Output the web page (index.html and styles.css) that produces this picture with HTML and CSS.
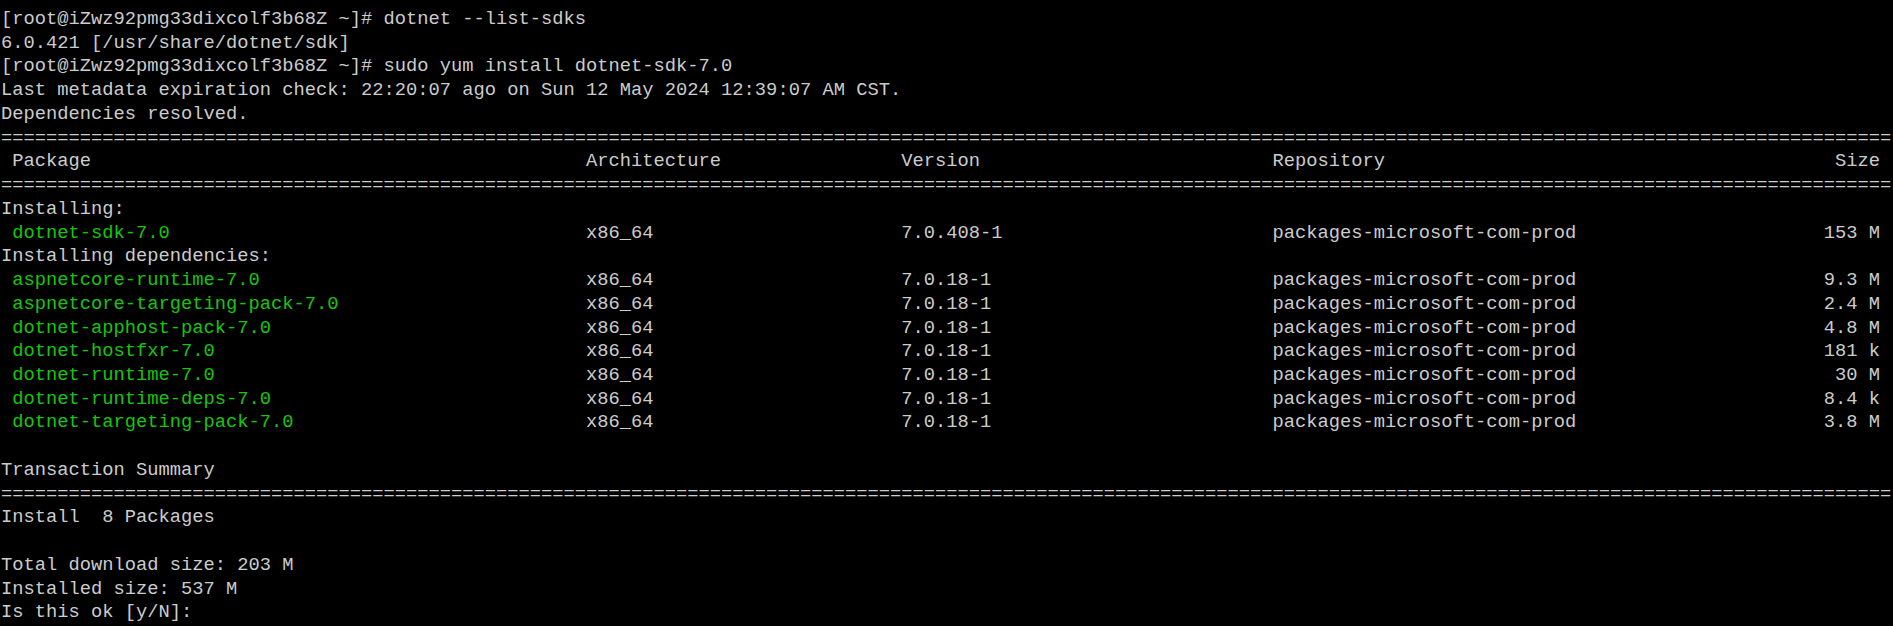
FILE: index.html
```html
<!DOCTYPE html>
<html lang="en">
<head>
<meta charset="utf-8">
<title>Terminal</title>
<link rel="stylesheet" href="styles.css">
</head>
<body>
<main class="term">
  <div class="line">[root@iZwz92pmg33dixcolf3b68Z ~]# dotnet --list-sdks</div>
  <div class="line">6.0.421 [/usr/share/dotnet/sdk]</div>
  <div class="line">[root@iZwz92pmg33dixcolf3b68Z ~]# sudo yum install dotnet-sdk-7.0</div>
  <div class="line">Last metadata expiration check: 22:20:07 ago on Sun 12 May 2024 12:39:07 AM CST.</div>
  <div class="line">Dependencies resolved.</div>
  <div class="line sep">========================================================================================================================================================================</div>
  <div class="row">
    <span class="c-pkg">Package</span><span>Architecture</span><span>Version</span><span>Repository</span><span class="c-size">Size</span>
  </div>
  <div class="line sep">========================================================================================================================================================================</div>
  <div class="line">Installing:</div>
  <div class="row">
    <span class="c-pkg green">dotnet-sdk-7.0</span><span>x86_64</span><span>7.0.408-1</span><span>packages-microsoft-com-prod</span><span class="c-size">153 M</span>
  </div>
  <div class="line">Installing dependencies:</div>
  <div class="row">
    <span class="c-pkg green">aspnetcore-runtime-7.0</span><span>x86_64</span><span>7.0.18-1</span><span>packages-microsoft-com-prod</span><span class="c-size">9.3 M</span>
  </div>
  <div class="row">
    <span class="c-pkg green">aspnetcore-targeting-pack-7.0</span><span>x86_64</span><span>7.0.18-1</span><span>packages-microsoft-com-prod</span><span class="c-size">2.4 M</span>
  </div>
  <div class="row">
    <span class="c-pkg green">dotnet-apphost-pack-7.0</span><span>x86_64</span><span>7.0.18-1</span><span>packages-microsoft-com-prod</span><span class="c-size">4.8 M</span>
  </div>
  <div class="row">
    <span class="c-pkg green">dotnet-hostfxr-7.0</span><span>x86_64</span><span>7.0.18-1</span><span>packages-microsoft-com-prod</span><span class="c-size">181 k</span>
  </div>
  <div class="row">
    <span class="c-pkg green">dotnet-runtime-7.0</span><span>x86_64</span><span>7.0.18-1</span><span>packages-microsoft-com-prod</span><span class="c-size">30 M</span>
  </div>
  <div class="row">
    <span class="c-pkg green">dotnet-runtime-deps-7.0</span><span>x86_64</span><span>7.0.18-1</span><span>packages-microsoft-com-prod</span><span class="c-size">8.4 k</span>
  </div>
  <div class="row">
    <span class="c-pkg green">dotnet-targeting-pack-7.0</span><span>x86_64</span><span>7.0.18-1</span><span>packages-microsoft-com-prod</span><span class="c-size">3.8 M</span>
  </div>
  <div class="line blank"></div>
  <div class="line">Transaction Summary</div>
  <div class="line sep">========================================================================================================================================================================</div>
  <div class="line">Install  8 Packages</div>
  <div class="line blank"></div>
  <div class="line">Total download size: 203 M</div>
  <div class="line">Installed size: 537 M</div>
  <div class="line">Is this ok [y/N]: </div>
</main>
</body>
</html>
```

FILE: styles.css
```css
html, body {
  margin: 0;
  padding: 0;
  background: #000000;
}

body {
  width: 1893px;
  height: 626px;
  overflow: hidden;
}

.term {
  padding: 8px 0 0 1px;
  font-family: "Liberation Mono", "DejaVu Sans Mono", monospace;
  font-size: 18.75px;
  line-height: 23.74px;
  color: #cccccc;
}

.line {
  white-space: pre;
  height: 23.74px;
  overflow: hidden;
}

.sep {
  width: 168ch;
}

.row {
  display: grid;
  grid-template-columns: 52ch 28ch 33ch 40ch 14ch;
  height: 23.74px;
  white-space: pre;
}

.c-pkg {
  padding-left: 1ch;
}

.c-size {
  text-align: right;
}

.green {
  color: #16c60c;
}
```
